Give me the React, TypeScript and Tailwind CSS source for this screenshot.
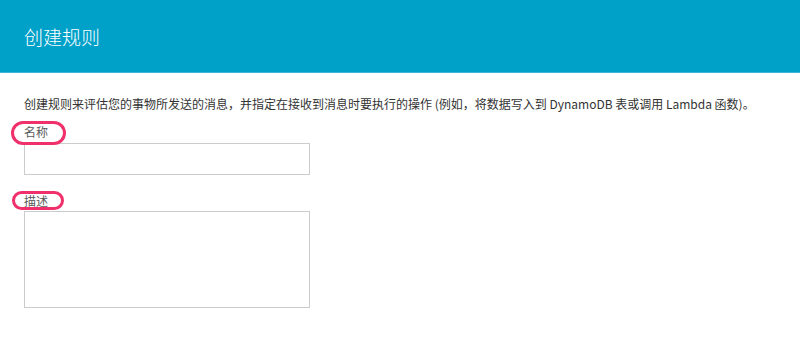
export default function App() {
  return (
    <div className="w-[800px] h-[340px] bg-white overflow-hidden font-['Noto_Sans_CJK_SC','Noto_Sans',sans-serif]">
      <header className="h-[73px] bg-[#00a1c9] border-b border-[#3db5d6] flex items-center px-6">
        <h1 className="text-[19px] font-light text-white leading-none">创建规则</h1>
      </header>
      <main className="px-6 pt-[23px] flex flex-col">
        <p className="text-[12px] leading-4 text-[#333]">
          创建规则来评估您的事物所发送的消息，并指定在接收到消息时要执行的操作 (例如，将数据写入到 DynamoDB 表或调用 Lambda 函数)。
        </p>

        <div className="mt-[12px] flex flex-col items-start">
          <label className="relative inline-block text-xs leading-4 text-[#5a5a5a]">
            名称
            <span className="absolute -left-[13px] -right-[18px] -top-[3px] -bottom-[5px] rounded-full border-[3px] border-[#f0306b]" />
          </label>
          <input className="mt-[3px] w-[286px] h-[32px] border border-[#ccc] bg-white outline-none" />
        </div>

        <div className="mt-[18px] flex flex-col items-start">
          <label className="relative inline-block text-xs leading-4 text-[#5a5a5a]">
            描述
            <span className="absolute -left-[12px] -right-[16px] -top-[2px] -bottom-[1px] rounded-full border-[3px] border-[#f0306b]" />
          </label>
          <textarea className="mt-[2px] w-[286px] h-[97px] border border-[#ccc] bg-white outline-none resize-none" />
        </div>
      </main>
    </div>
  );
}
